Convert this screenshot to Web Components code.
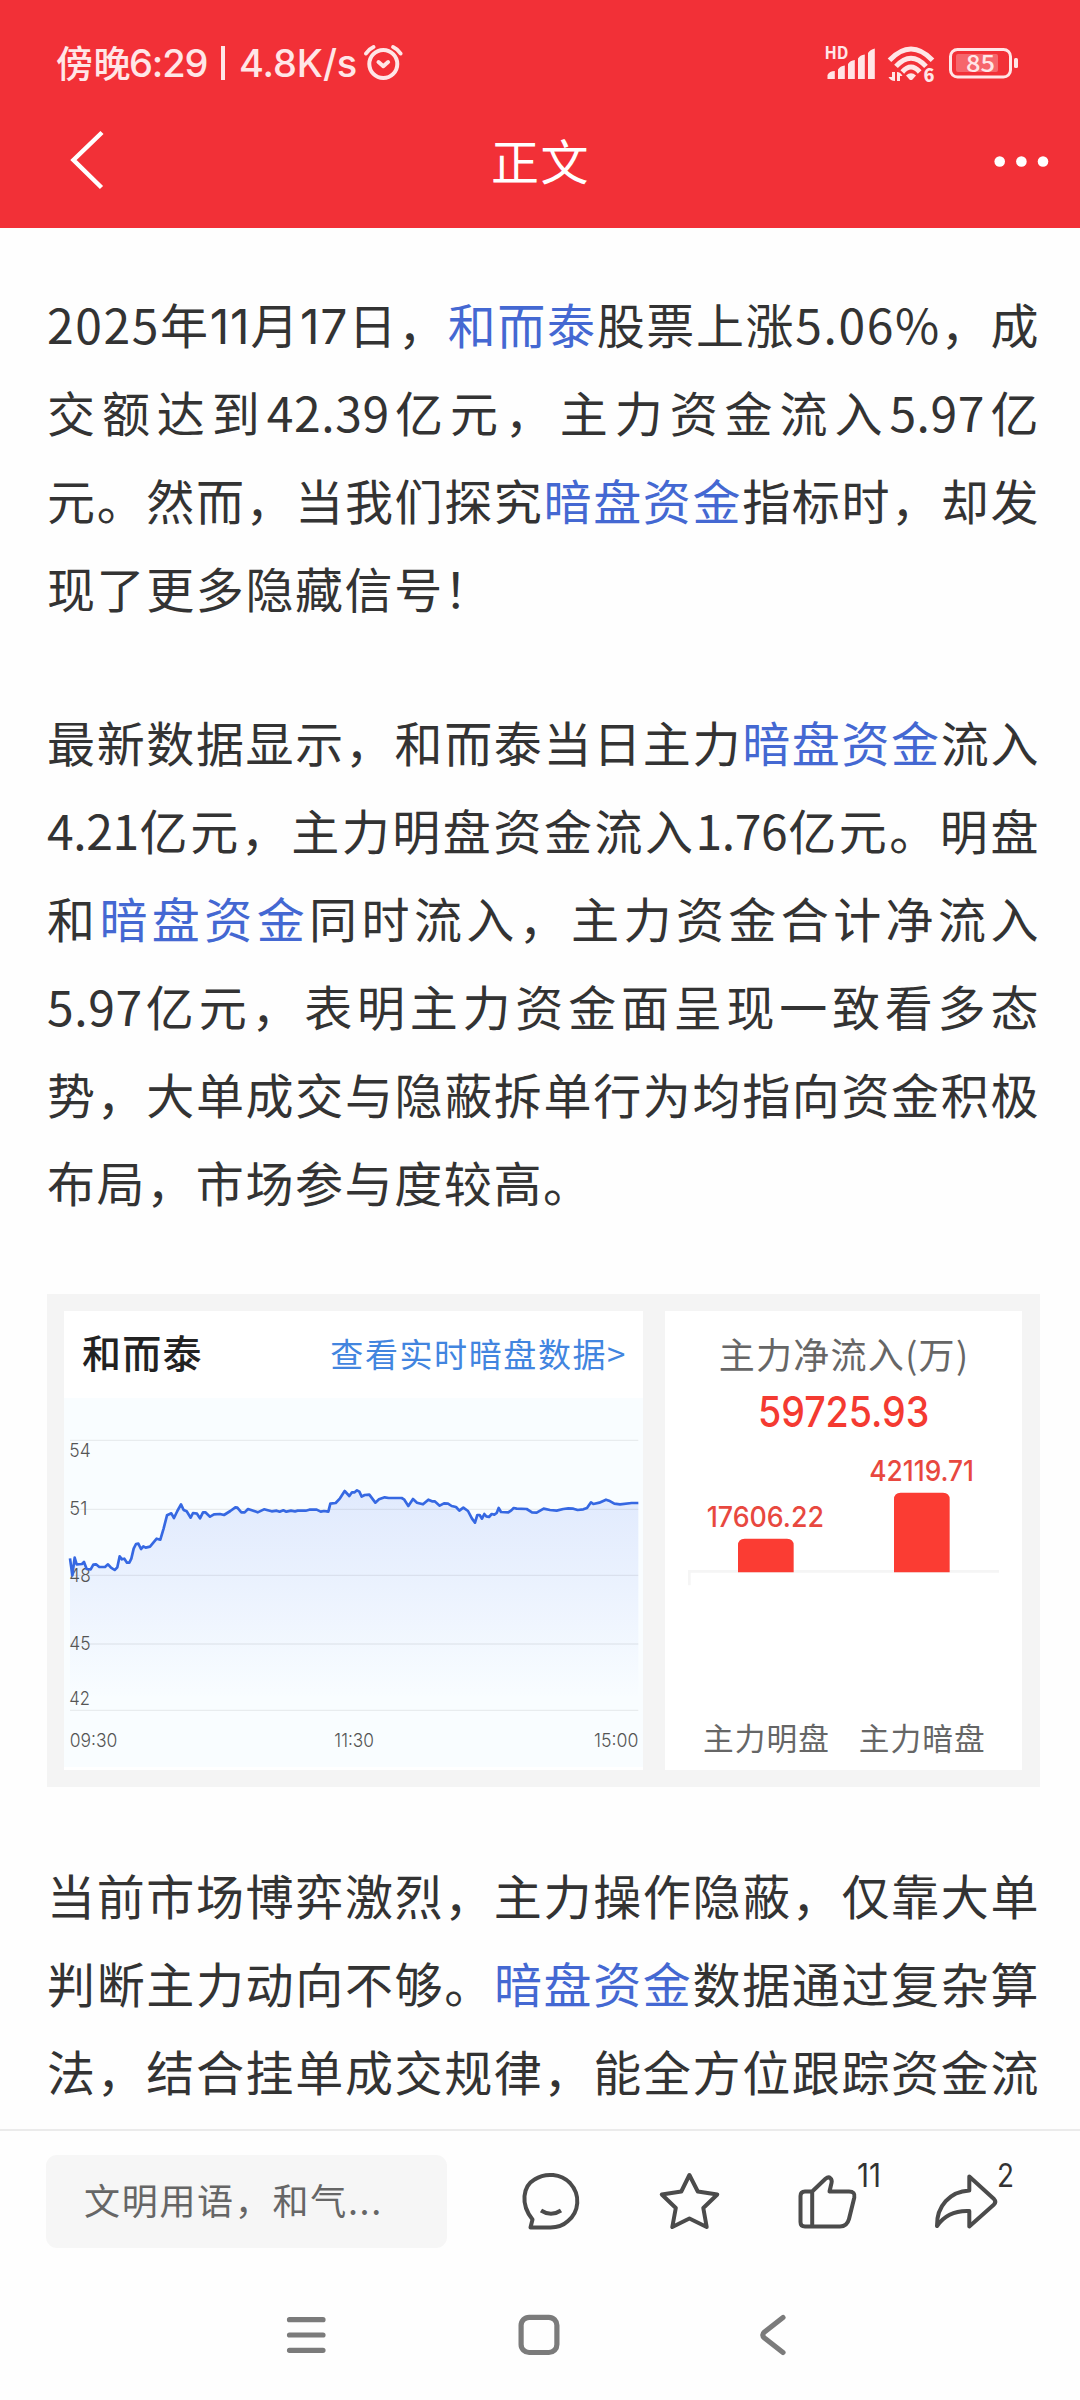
<!DOCTYPE html>
<html lang="zh-CN">
<head>
<meta charset="utf-8">
<title>正文</title>
<style>
  body {
    margin: 0;
    font-family: "Noto Sans CJK SC", "Noto Sans", sans-serif;
    color: #333;
    background: #fefefe;
    text-spacing-trim: space-all;
  }
  .ones {
    font-family: Inter, sans-serif;
    letter-spacing: .8px;
  }
  .tight { letter-spacing: .6px; }
  .tighter { letter-spacing: -.4px; }
</style>
</head>
<body>
<news-page>
  <status-bar slot="top" day="傍晚" time="6:29" speed="4.8K/s" battery="85"></status-bar>
  <title-bar slot="top">正文</title-bar>

  <article-paragraph>
    <article-line>2025年<span class="ones">11</span>月<span class="ones">17</span>日，<stock-link>和而泰</stock-link>股票上涨5.06%，成</article-line>
    <article-line>交额达到<span class="tight">42.39</span>亿元，主力资金流入<span class="tight">5.97</span>亿</article-line>
    <article-line>元。然而，当我们探究<stock-link>暗盘资金</stock-link>指标时，却发</article-line>
    <article-line last>现了更多隐藏信号！</article-line>
  </article-paragraph>

  <article-paragraph>
    <article-line>最新数据显示，和而泰当日主力<stock-link>暗盘资金</stock-link>流入</article-line>
    <article-line><span class="tighter">4.21</span>亿元，主力明盘资金流入<span class="tighter">1.76</span>亿元。明盘</article-line>
    <article-line>和<stock-link>暗盘资金</stock-link>同时流入，主力资金合计净流入</article-line>
    <article-line><span class="tight">5.97</span>亿元，表明主力资金面呈现一致看多态</article-line>
    <article-line>势，大单成交与隐蔽拆单行为均指向资金积极</article-line>
    <article-line last>布局，市场参与度较高。</article-line>
  </article-paragraph>

  <fund-card>
    <price-panel name="和而泰">查看实时暗盘数据&gt;</price-panel>
    <flow-panel total="59725.93">主力净流入(万)</flow-panel>
  </fund-card>

  <article-paragraph>
    <article-line>当前市场博弈激烈，主力操作隐蔽，仅靠大单</article-line>
    <article-line>判断主力动向不够。<stock-link>暗盘资金</stock-link>数据通过复杂算</article-line>
    <article-line>法，结合挂单成交规律，能全方位跟踪资金流</article-line>
  </article-paragraph>

  <comment-bar slot="bottom" placeholder="文明用语，和气...">
    <action-icon name="chat"></action-icon>
    <action-icon name="star"></action-icon>
    <action-icon name="like" count="11"></action-icon>
    <action-icon name="share" count="2"></action-icon>
  </comment-bar>
  <system-nav slot="bottom"></system-nav>
</news-page>

<script>
const define = (name, render) => {
  customElements.define(name, class extends HTMLElement {
    constructor() {
      super()
      this.attachShadow({ mode: 'open' }).innerHTML = render(this)
    }
  })
}

define('news-page', () => `
  <style>
  :host {
    display: flex;
    flex-direction: column;
    width: 1080px;
    height: 2400px;
    overflow: hidden;
  }
  main {
    flex: 1;
    min-height: 0;
    overflow: hidden;
    padding: 51px 40px 0 47px;
    box-sizing: border-box;
  }
  </style>
  <slot name="top"></slot>
  <main><slot></slot></main>
  <slot name="bottom"></slot>
`)

define('status-bar', (el) => `
  <style>
  :host {
    display: flex;
    justify-content: space-between;
    box-sizing: border-box;
    height: 124px;
    padding: 0 62px 0 56px;
    background: #f23037;
    color: #ffe6e7;
    font-weight: 500;
  }
  .left {
    display: flex;
    align-items: center;
    height: 126px;
    font-size: 38px;
    white-space: pre;
  }
  .day {
    width: 73px;
    margin-top: -3px;
    font-size: 37px;
    letter-spacing: .6px;
    line-height: 50px;
  }
  .time, .speed { font-family: Inter, sans-serif; }
  .time { width: 78px; letter-spacing: -1.100px; }
  .rule {
    width: 4px;
    height: 34px;
    margin: 0 14px;
    background: currentColor;
  }
  .speed { width: 118px; letter-spacing: -.1px; }
  svg { display: block; }
  .alarm { margin-left: 5px; }
  </style>
  <div class="left">
    <span class="day">${el.getAttribute('day')}</span>
    <span class="time">${el.getAttribute('time')}</span>
    <span class="rule"></span>
    <span class="speed">${el.getAttribute('speed')}</span>
    <svg class="alarm" width="42" height="40" viewBox="362 43 42 40" fill="none" stroke="currentColor" stroke-width="4" stroke-linecap="round" stroke-linejoin="round">
      <circle cx="383.3" cy="64" r="14"/>
      <path d="M378.5 62l4.8 4.2 4.8-4.2M366 53.5q3-4.500 7.500-6.500M400.600 53.500q-3-4.500-7.500-6.500"/>
    </svg>
  </div>
  <svg width="196" height="124" viewBox="822 0 196 124" fill="currentColor">
    <text x="824.500" y="59" font-size="16.500" font-weight="700" textLength="24" lengthAdjust="spacingAndGlyphs">HD</text>
    <path d="M827.500 79v-4q2-4 7.300-4v8zM838 79v-9.500q2-3.500 6.800-4v13.500zM848 79v-15q2-3.500 6.800-4v19zM858 79v-20.500q2-3.500 6.800-4v24.500zM868 79v-26q2-3.500 6.800-4.500v30.500z"/>
    <g fill="none" stroke="currentColor" stroke-width="5">
      <path d="M889.500 60.200q21.500-22.400 43 0M896 66.400q15-16.400 30 0M902.300 72q8.700-9.800 17.400 0"/>
    </g>
    <path d="M906 75.500q5-4.500 10 0l-3.500 4q-1.500 1.200-3 0z"/>
    <path d="M895 72h-3v5h-3.500q2 4 6.500 4zM897 81h3v-5h2.500q-2-4-5.500-4z"/>
    <text x="923.500" y="81.500" font-size="18" font-weight="900">6</text>
    <rect x="950.500" y="49.500" width="60" height="27.500" rx="7" fill="none" stroke="currentColor" stroke-width="3"/>
    <rect x="956" y="54" width="42" height="18" rx="2" opacity=".3"/>
    <rect x="1014" y="58" width="4" height="10" rx="1.500"/>
    <text x="966" y="72" font-size="23" textLength="29" lengthAdjust="spacingAndGlyphs">${el.getAttribute('battery')}</text>
  </svg>
`)

define('title-bar', () => `
  <style>
  :host {
    display: grid;
    grid-template-columns: 1fr auto 1fr;
    align-items: center;
    box-sizing: border-box;
    height: 104px;
    padding: 0 30px 32px 68px;
    background: #f23037;
    color: #fff;
    font-size: 48px;
    line-height: 70px;
    letter-spacing: 1.6px;
  }
  svg { display: block; fill: none; stroke: #fff; }
  .title { margin: -2px 0 0 -37px; }
  .more { justify-self: end; fill: #fff; stroke: none; }
  </style>
  <svg width="40" height="64" viewBox="68 128 40 64" stroke-width="4.500"><path d="M102 132.500L73.500 160l28 27.500"/></svg>
  <span class="title"><slot></slot></span>
  <svg class="more" width="60" height="64" viewBox="990 128 60 64">
    <circle cx="999.700" cy="161.500" r="5.300"/><circle cx="1021.400" cy="161.500" r="5.300"/><circle cx="1043" cy="161.500" r="5.300"/>
  </svg>
`)

define('article-paragraph', () => `
  <style>
  :host {
    display: block;
    width: 993px;
    margin-bottom: 66px;
    font-size: 48px;
    line-height: 88px;
    letter-spacing: 1.6px;
  }
  </style>
  <slot></slot>
`)

define('article-line', () => `
  <style>
  :host {
    display: block;
    height: 88px;
    white-space: nowrap;
    text-align: justify;
    text-align-last: justify;
  }
  :host([last]) { text-align-last: start; }
  </style>
  <slot></slot>
`)

define('stock-link', () => `<style>:host { color: #4468d2; }</style><slot></slot>`)

define('fund-card', () => `
  <style>
  :host {
    display: flex;
    justify-content: space-between;
    box-sizing: border-box;
    height: 493px;
    margin: 69px 0 63px;
    padding: 17px 18px 17px 17px;
    background: #f4f4f4;
  }
  </style>
  <slot></slot>
`)

// price curve, in thirds of a pixel
const prices = `90,835 97,886 104,833 110,853 126,852 132,846 140,867 152,868 160,854 168,853
  178,861 195,861 204,853 213,863 224,870 232,862 239,829 246,838 253,836 261,848 268,848 274,836
  281,806 288,792 295,791 303,807 310,799 317,803 330,800 350,776 361,779 371,745 381,706 394,700
  402,714 412,693 423,673 431,690 440,694 452,713 459,699 471,701 480,715 489,697 496,697 510,710
  522,703 540,702 552,705 571,693 586,682 592,683 604,697 614,697 624,687 640,692 653,697 672,688
  695,694 710,692 719,695 730,691 739,695 753,692 765,694 773,692 797,692 808,689 830,689 842,695
  852,693 865,695 871,671 887,669 900,655 914,633 928,648 936,637 944,637 951,631 958,635 965,650
  974,645 988,644 1006,668 1017,658 1034,652 1046,654 1085,654 1092,658 1105,678 1119,657 1131,668
  1149,673 1165,659 1176,664 1184,664 1199,677 1212,670 1224,671 1235,678 1248,681 1258,692
  1270,683 1284,693 1296,716 1305,728 1312,705 1319,705 1326,716 1333,702 1339,709 1347,711
  1355,702 1363,704 1370,699 1376,684 1383,696 1405,697 1414,691 1421,684 1430,686 1460,687
  1476,697 1490,698 1511,686 1530,690 1550,692 1570,687 1585,685 1600,686 1613,690 1630,688
  1641,684 1653,667 1660,672 1678,668 1698,659 1707,662 1723,671 1740,673 1775,669 1795,669`

define('price-panel', (el) => {
  const grid = [481, 688, 886, 1092, 1291]
    .map(y => `<path d="M90 ${y}H1795"/>`).join('')
  const label = (text, x, y, width) =>
    `<text x="${x}" y="${y}" textLength="${width}" lengthAdjust="spacingAndGlyphs">${text}</text>`
  return `
  <style>
  :host {
    display: flex;
    flex-direction: column;
    width: 579px;
    height: 459px;
    background: #fff;
  }
  header {
    display: flex;
    align-items: center;
    justify-content: space-between;
    box-sizing: border-box;
    height: 87px;
    padding: 0 16px 4px 18px;
  }
  h2 {
    margin: -3px 0 0;
    font-size: 39px;
    font-weight: 500;
    line-height: 56px;
    letter-spacing: 1.300px;
    color: #222;
  }
  .more {
    font-size: 33px;
    letter-spacing: 1.600px;
    color: #4285df;
  }
  svg { display: block; background: #f9fdff; }
  text { font: 300 57px Inter, sans-serif; fill: #555; }
  </style>
  <header><h2>${el.getAttribute('name')}</h2><span class="more"><slot></slot></span></header>
  <svg width="579" height="369" viewBox="72 354 1737 1107">
    <defs>
      <linearGradient id="fade" x1="0" y1="0" x2="0" y2="1">
        <stop offset="0" stop-color="#3d6af2" stop-opacity=".13"/>
        <stop offset=".4" stop-color="#3d6af2" stop-opacity=".08"/>
        <stop offset=".95" stop-color="#3d6af2" stop-opacity="0"/>
      </linearGradient>
    </defs>
    <polygon points="90,1291 ${prices} 1795,1291" fill="url(#fade)"/>
    <g stroke="#000" stroke-opacity=".065" stroke-width="4">${grid}</g>
    ${label(54, 88, 530, 64)}
    ${label(51, 88, 705, 54)}
    ${label(48, 88, 906, 64)}
    ${label(45, 88, 1109, 64)}
    ${label(42, 88, 1275, 62)}
    <polyline points="${prices}" fill="none" stroke="#3668e2" stroke-width="8" stroke-linejoin="round"/>
    ${label('09:30', 89, 1402, 143)}
    ${label('11:30', 883, 1402, 119)}
    ${label('15:00', 1662, 1402, 133)}
  </svg>
`})

define('flow-panel', (el) => `
  <style>
  :host {
    display: flex;
    flex-direction: column;
    align-items: center;
    width: 357px;
    height: 459px;
    background: #fff;
  }
  .title {
    margin: 16px 0 1px 1px;
    font-size: 36px;
    line-height: 52px;
    letter-spacing: 1.300px;
    color: #666;
  }
  svg { display: block; }
  .total { font: 500 126px Inter, sans-serif; fill: #f43a31; }
  .value { font: 500 84px Inter, sans-serif; fill: #e8483f; }
  .name { font-size: 92px; fill: #666; }
  </style>
  <span class="title"><slot></slot></span>
  <svg width="357" height="390" viewBox="75 300 1071 1170">
    <text class="total" x="354" y="441" textLength="514" lengthAdjust="spacingAndGlyphs">${el.getAttribute('total')}</text>
    <path d="M144 874H1077M148 874V916" stroke="#f5f5f5" stroke-width="8"/>
    <path d="M294 877V796Q294 776 314 776H441Q461 776 461 796V877ZM762 877V658Q762 638 782 638H909Q929 638 929 658V877Z" fill="#fb3c33"/>
    <text class="value" x="200" y="742" textLength="352" lengthAdjust="spacingAndGlyphs">17606.22</text>
    <text class="value" x="688" y="604" textLength="314" lengthAdjust="spacingAndGlyphs">42119.71</text>
    <text class="name" x="189" y="1411" textLength="378">主力明盘</text>
    <text class="name" x="656" y="1411" textLength="378">主力暗盘</text>
  </svg>
`)

define('comment-bar', (el) => `
  <style>
  :host {
    display: flex;
    align-items: flex-start;
    box-sizing: border-box;
    height: 161px;
    padding: 24px 0 0 46px;
    border-top: 2px solid #ebebeb;
  }
  .input {
    box-sizing: border-box;
    width: 401px;
    height: 93px;
    margin-right: 54px;
    padding-left: 38px;
    border-radius: 11px;
    background: #f6f6f6;
    color: #666;
    font-size: 36px;
    line-height: 88px;
    letter-spacing: 1.700px;
  }
  </style>
  <div class="input">${el.getAttribute('placeholder')}</div>
  <slot></slot>
`)

const icons = {
  chat: ['501 2155 138 93', 'M532.500 2219.500C520 2204 523 2186 534.500 2179.500C546 2172 561 2174 570 2183C581 2195 579 2212 568 2221Q561 2227.500 550.500 2227.500H530.500ZM541 2210.500Q551 2217 561 2210.500'],
  star: ['639 2155 138 93', 'M689.400 2175L697.800 2191.500 717.300 2194.500 703.300 2208 706.700 2227 689.400 2218.500 672.300 2227 675.800 2208 661.800 2194.500 681.300 2191.500Z'],
  like: ['777 2155 138 93', 'M812.200 2191.500V2226.500M812.200 2191.500L825.500 2178.800C829.500 2175.500 832.500 2179 831.500 2183L829.500 2191.500H849Q855.500 2191.500 854.300 2197.500L849 2219Q847 2226.500 840 2226.500H805Q800.500 2226.500 800.500 2222V2196Q800.500 2191.500 805 2191.500Z'],
  share: ['915 2155 138 93', 'M969.300 2176.500L994 2199Q996.500 2201.700 994 2204.500L969.300 2226.500V2211Q948 2210 937 2226C936.500 2206 950 2191.500 969.300 2190.500Z'],
}

define('action-icon', (el) => {
  const [box, path] = icons[el.getAttribute('name')]
  const [x, width] = { like: [857, 24], share: [997, 17] }[el.getAttribute('name')] || []
  const count = el.getAttribute('count')
  return `
  <style>
  :host { display: block; width: 138px; height: 93px; }
  svg { display: block; }
  text { font: 32px Inter, sans-serif; fill: #333; }
  </style>
  <svg width="138" height="93" viewBox="${box}">
    <path d="${path}" fill="none" stroke="#4b4b4b" stroke-width="4" stroke-linejoin="round"/>
    ${count ? `<text x="${x}" y="2186.700" textLength="${width}" lengthAdjust="spacingAndGlyphs">${count}</text>` : ''}
  </svg>
`})

define('system-nav', () => `
  <style>
  :host {
    display: grid;
    grid-template-columns: repeat(3, 42px);
    column-gap: 191px;
    box-sizing: border-box;
    height: 110px;
    padding: 22px 0 0 285px;
  }
  svg { display: block; fill: none; stroke: #7b7b7b; stroke-width: 5.200; stroke-linecap: round; stroke-linejoin: round; }
  </style>
  <svg width="42" height="46" viewBox="285 2312 42 46"><path d="M289.500 2319.700h33.500M289.500 2335h33.500M289.500 2350.300h33.500"/></svg>
  <svg width="42" height="46" viewBox="518 2312 42 46"><rect x="521.100" y="2317.300" width="35.800" height="35.200" rx="8"/></svg>
  <svg width="42" height="46" viewBox="751 2312 42 46"><path d="M783 2317.500L764.500 2332Q761 2335 764.500 2338L783 2352.500"/></svg>
`)
</script>
</body>
</html>
